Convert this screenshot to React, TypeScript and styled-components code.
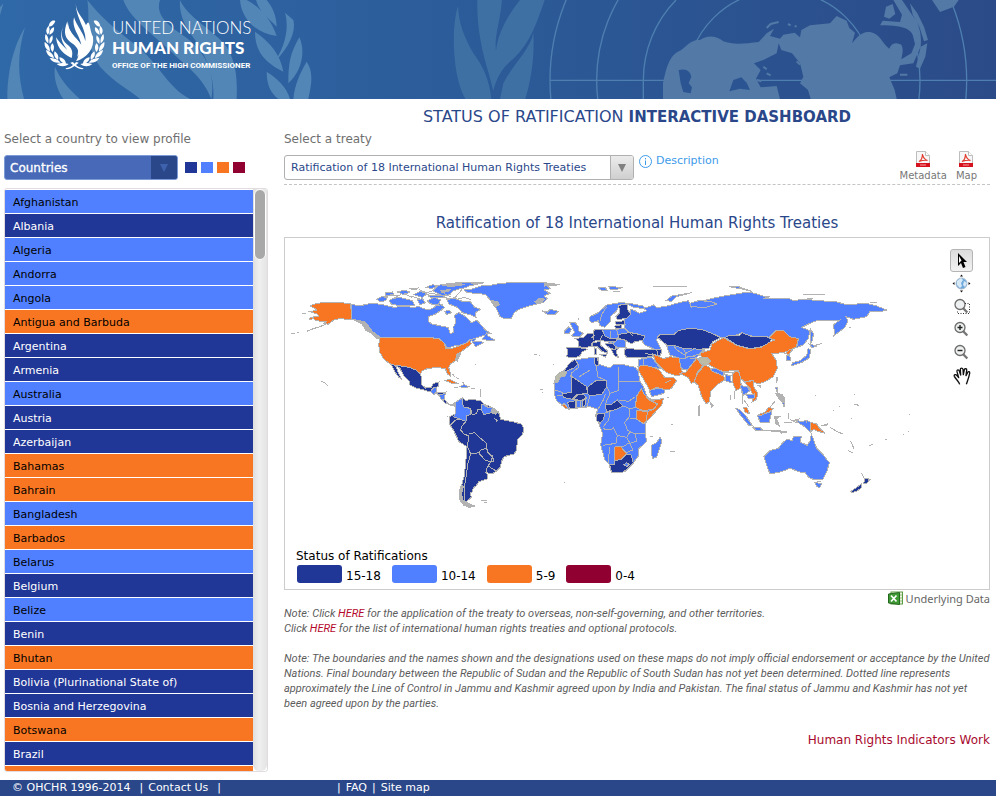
import React from "react";
import styled, { createGlobalStyle, css } from "styled-components";

const palette = {
  dark: "#213797",
  light: "#5080ff",
  orange: "#f87622",
  maroon: "#900030",
  navy: "#2a478a",
  coast: "#b2b2b2",
};

type Tone = "dark" | "light" | "orange" | "maroon";

const GlobalStyle = createGlobalStyle`
  * { box-sizing: border-box; }
  body {
    margin: 0;
    background: #fff;
    font-family: "DejaVu Sans", Verdana, sans-serif;
    font-size: 12px;
    color: #666;
  }
  h1, h2, p, ul { margin: 0; padding: 0; font-weight: normal; }
  a { text-decoration: none; color: inherit; }
  button, select { font-family: inherit; }
`;

/* ---------- header ---------- */

const Banner = styled.header`
  display: grid;
  height: 99px;
  overflow: hidden;
  background: linear-gradient(90deg, #3069a8 0%, #2d5f9d 35%, #2b5794 62%, #2b4b88 100%);
`;

const BannerArt = styled.svg`
  grid-area: 1 / 1;
  width: 100%;
  height: 99px;
`;

const Brand = styled.a`
  grid-area: 1 / 1;
  display: flex;
  align-self: start;
  justify-self: start;
  padding-left: 43px;
  color: #fff;
`;

const Emblem = styled.svg`
  width: 63px;
  height: 72px;
`;

const BrandText = styled.span`
  display: flex;
  flex-direction: column;
  padding: 18px 0 0 6px;
  font-family: Lato, sans-serif;
  white-space: nowrap;
`;

const BrandLine = styled.span<{ $kind: "thin" | "bold" | "small" }>`
  ${({ $kind }) =>
    $kind === "thin"
      ? css`font-size: 17px; line-height: 20px; font-weight: 300;`
      : $kind === "bold"
        ? css`font-size: 17px; line-height: 20px; font-weight: 900;`
        : css`font-family: Roboto, sans-serif; font-size: 8px; line-height: 16px; font-weight: 700;`}
`;

/* ---------- layout ---------- */

const Page = styled.main`
  display: grid;
  grid-template-columns: 264px minmax(0, 1fr);
  column-gap: 16px;
  padding: 0 6px 8px 4px;
`;

const Sidebar = styled.aside`
  padding-top: 31px;
`;

const Content = styled.section`
  padding-top: 7px;
`;

const FieldLabel = styled.label`
  display: block;
  line-height: 18px;
  color: #6f6f6f;
`;

const PickerRow = styled.div`
  display: flex;
  align-items: center;
  gap: 7px;
  margin-top: 7px;
`;

const Picker = styled.div<{ $solid?: boolean }>`
  display: grid;
  grid-template-columns: 1fr ${({ $solid }) => ($solid ? 26 : 23)}px;
  width: ${({ $solid }) => ($solid ? 174 : 350)}px;
  height: 25px;
  border: 1px solid ${({ $solid }) => ($solid ? "#7c9ad6" : "#b0b0b0")};
  border-radius: 3px;
  overflow: hidden;
  background: ${({ $solid }) => ($solid ? "#4869b7" : "#fff")};
`;

const Select = styled.select<{ $solid?: boolean }>`
  grid-area: 1 / 1 / 2 / 3;
  appearance: none;
  border: 0;
  outline: 0;
  background: transparent;
  padding: 0 30px 0 ${({ $solid }) => ($solid ? 5 : 6)}px;
  font-size: ${({ $solid }) => ($solid ? 12 : 11)}px;
  color: ${({ $solid }) => ($solid ? "#fff" : palette.navy)};
  -webkit-text-stroke: ${({ $solid }) => ($solid ? "0.3px" : "0")};
`;

const PickerArrow = styled.span<{ $solid?: boolean }>`
  grid-area: 1 / 2;
  display: grid;
  place-items: center;
  pointer-events: none;
  color: ${({ $solid }) => ($solid ? "#3f62ae" : "#808080")};
  background: ${({ $solid }) => ($solid ? palette.navy : "linear-gradient(#ececec, #cfcfcf)")};
  border-left: ${({ $solid }) => ($solid ? "0" : "1px solid #b0b0b0")};
`;

const Keys = styled.div`
  display: flex;
  gap: 4px;
`;

const Key = styled.span<{ $tone: Tone }>`
  width: 12px;
  height: 11px;
  background: ${({ $tone }) => palette[$tone]};
`;

const ListFrame = styled.div`
  display: grid;
  grid-template-columns: 1fr 14px;
  height: 584px;
  margin-top: 8px;
  border: 1px solid #e2dcde;
  border-radius: 3px;
  overflow: hidden;
`;

const CountryList = styled.ul`
  list-style: none;
  padding-top: 1px;
  overflow: hidden auto;
  scrollbar-width: none;
`;

const CountryRow = styled.li`
  height: 24px;
  padding-bottom: 1px;
`;

const CountryButton = styled.button<{ $tone: Tone }>`
  display: block;
  width: 100%;
  height: 23px;
  padding: 2px 8px 0;
  border: 0;
  text-align: left;
  font-size: 11px;
  line-height: 21px;
  background: ${({ $tone }) => palette[$tone]};
  color: ${({ $tone }) => ($tone === "dark" ? "#fff" : "#000")};
`;

const Track = styled.div`
  padding: 0 1px;
  background: linear-gradient(90deg, #dedede, #efefef 45%, #e4e4e4);
  border-radius: 0 0 6px 6px;
`;

const Thumb = styled.div`
  height: 71px;
  border: 1px solid #fff;
  border-radius: 6px;
  background: #a8a8a8;
`;

/* ---------- content ---------- */

const DashboardTitle = styled.h1`
  text-align: center;
  font-size: 16px;
  line-height: 22px;
  margin-bottom: 2px;
  color: ${palette.navy};
`;

const TitleStrong = styled.b`
  font-size: 15px;
`;

const TreatyBar = styled.div`
  display: flex;
  align-items: flex-start;
  height: 37px;
  border-bottom: 1px dashed #c4c4c4;
`;

const TreatyPicker = styled.div`
  margin-top: 7px;
`;

const DescriptionLink = styled.a`
  display: flex;
  align-items: center;
  gap: 4px;
  margin: 5px auto 0 5px;
  line-height: 16px;
  font-size: 11px;
  color: #3d9be9;
`;

const Downloads = styled.div`
  display: flex;
  gap: 9px;
  padding-right: 13px;
`;

const Download = styled.a`
  display: flex;
  flex-direction: column;
  align-items: center;
  padding-top: 3px;
  gap: 2px;
  font-size: 10px;
  line-height: 14px;
  color: #777;
`;

const MapTitle = styled.h2`
  margin-top: 28px;
  text-align: center;
  font-size: 15px;
  line-height: 20px;
  color: ${palette.navy};
`;

const MapPanel = styled.div`
  margin-top: 4px;
  border: 1px solid #ccc;
`;

const MapRow = styled.div`
  display: flex;
  align-items: flex-start;
  padding-right: 16px;
`;

const WorldMap = styled.svg`
  flex: 1;
  min-width: 0;
  aspect-ratio: 665 / 307;
`;

const Tools = styled.div`
  display: flex;
  flex-direction: column;
  padding-top: 11px;
`;

const Tool = styled.button<{ $active?: boolean }>`
  display: grid;
  place-items: center;
  width: 23px;
  height: 23px;
  padding: 0;
  border: 1px solid ${({ $active }) => ($active ? "#b5b5b5" : "transparent")};
  border-radius: 3px;
  background: ${({ $active }) => ($active ? "linear-gradient(#dcdcdc, #f2f2f2)" : "transparent")};
`;

const Legend = styled.div`
  padding: 2px 12px 6px 11px;
  color: #000;
`;

const LegendTitle = styled.p`
  line-height: 18px;
`;

const LegendItems = styled.ul`
  display: flex;
  gap: 11px;
  padding-left: 1px;
  list-style: none;
`;

const LegendItem = styled.li`
  display: flex;
  gap: 4px;
  line-height: 23px;
  height: 18px;
`;

const Swatch = styled.span<{ $tone: Tone }>`
  width: 45px;
  height: 18px;
  border-radius: 3px;
  background: ${({ $tone }) => palette[$tone]};
`;

const DataLink = styled.a`
  display: flex;
  justify-content: flex-end;
  align-items: center;
  gap: 3px;
  height: 16px;
  padding-top: 1px;
  font-family: "Noto Sans", "Open Sans", sans-serif;
  font-size: 11px;
`;

const Note = styled.p`
  margin: 0 -2px 15px 0;
  font-family: Roboto, sans-serif;
  font-style: italic;
  font-size: 11px;
  line-height: 15px;
  color: #5c5c5c;
`;

const NoteLink = styled.a`
  color: #b5082c;
`;

const IndicatorsLink = styled.a`
  display: block;
  margin-top: 21px;
  text-align: right;
  line-height: 16px;
  color: #a80a2e;
`;

const Footer = styled.footer`
  display: flex;
  height: 16px;
  padding-left: 12px;
  background: ${palette.navy};
  color: #fff;
  font-size: 11px;
  line-height: 15px;
`;

const FooterGroup = styled.div<{ $width?: number }>`
  display: flex;
  gap: 5px;
  min-width: ${({ $width }) => ($width ? `${$width}px` : "auto")};
`;

const FooterSpaced = styled.span`
  padding-right: 4px;
`;

/* ---------- data ---------- */

const countries: [string, Tone][] = [
  ["Afghanistan", "light"],
  ["Albania", "dark"],
  ["Algeria", "light"],
  ["Andorra", "light"],
  ["Angola", "light"],
  ["Antigua and Barbuda", "orange"],
  ["Argentina", "dark"],
  ["Armenia", "dark"],
  ["Australia", "light"],
  ["Austria", "dark"],
  ["Azerbaijan", "dark"],
  ["Bahamas", "orange"],
  ["Bahrain", "orange"],
  ["Bangladesh", "light"],
  ["Barbados", "orange"],
  ["Belarus", "light"],
  ["Belgium", "dark"],
  ["Belize", "light"],
  ["Benin", "dark"],
  ["Bhutan", "orange"],
  ["Bolivia (Plurinational State of)", "dark"],
  ["Bosnia and Herzegovina", "dark"],
  ["Botswana", "orange"],
  ["Brazil", "dark"],
];

const legend: [Tone, string][] = [
  ["dark", "15-18"],
  ["light", "10-14"],
  ["orange", "5-9"],
  ["maroon", "0-4"],
];

type Region = { fill: string; d: string };
const { dark: D, light: L, orange: O, coast: G } = palette;

const americas: Region[] = [
  { fill: O, d: "M78 108L92 102 122 96 200 100 203 147 185 148 170 145 150 150 132 163 120 160 125 155 95 152 88 145 76 150 78 143 105 138 100 132 78 125 100 120Z" },
  { fill: L, d: "M203 103L225 108 262 100 290 103 330 112 365 108 390 114 400 108 420 116 436 120 450 112 466 100 482 112 470 122 455 132 432 140 432 155 445 162 470 168 492 172 498 190 508 188 507 172 515 160 512 135 525 128 545 140 562 158 578 150 596 170 604 180 620 190 600 196 570 206 560 214 535 224 510 228 490 234 482 222 465 206 440 203 288 203 270 190 250 178 232 158 203 148Z" },
  { fill: G, d: "M203 147L215 150 240 155 255 170 264 183 290 203 280 206 266 192 246 182 234 162Z" },
  { fill: L, d: "M595 208L608 188 612 198 622 204 634 210 620 213Z" },
  { fill: L, d: "M560 208L575 206 570 214 592 214 598 218 575 230Z" },
  { fill: L, d: "M320 88L345 82 370 88 385 92 392 106 350 108 322 102 316 94Z" },
  { fill: L, d: "M278 88L292 80 310 80 305 92 290 96Z" },
  { fill: L, d: "M486 84L510 84 535 94 560 96 572 112 590 118 574 128 576 142 560 135 535 128 520 112 495 102Z" },
  { fill: L, d: "M430 92L450 82 470 90 462 104 440 102Z" },
  { fill: L, d: "M426 52L446 44 458 48 442 56ZM446 62L462 46 500 40 540 37 600 38 575 44 556 48 540 54 520 58 505 64 498 74 476 78 460 70Z" },
  { fill: G, d: "M470 44L530 40 540 44 500 50ZM470 62L500 58 494 64 474 68ZM560 40L600 38 575 44Z" },
  { fill: L, d: "M340 66L360 60 378 66 360 74ZM390 74L410 64 430 72 415 82ZM304 68L325 66 330 74 305 76ZM375 56L402 54 395 60Z" },
  { fill: L, d: "M400 90L415 86 424 98 408 104ZM432 78L472 76 484 82 445 84ZM482 124L495 120 502 128 488 134Z" },
  { fill: L, d: "M540 60L560 58 590 48 620 46 650 40 720 36 780 38 828 44 790 48 800 56 780 60 798 70 780 78 790 86 778 98 765 100 735 108 705 118 690 128 682 146 660 145 648 140 640 122 632 108 620 92 605 74 580 70 550 68Z" },
  { fill: G, d: "M620 92L640 94 646 104 634 112ZM780 38L828 44 782 48ZM752 96L768 84 782 88 768 100Z" },
  { fill: O, d: "M288 203L440 203 465 206 482 220 484 234 500 236 520 230 548 218 556 210 562 222 545 235 525 250 520 268 500 282 494 292 498 306 498 318 490 312 484 296 460 292 430 296 412 304 410 312 395 300 375 292 350 288 322 284 300 268 288 248 284 225Z" },
  { fill: G, d: "M520 250L530 250 524 262 520 274 514 270Z" },
  { fill: D, d: "M322 284L350 288 375 292 395 300 410 312 413 330 414 345 425 354 442 352 448 340 465 336 462 350 450 356 440 366 420 360 395 354 378 345 376 334 360 318 346 292 336 290 342 306 354 330 345 322 332 305Z" },
  { fill: L, d: "M440 364L448 354 458 352 458 368 448 374Z" },
  { fill: D, d: "M456 368L485 366 478 376 462 374Z" },
  { fill: L, d: "M464 376L484 370 480 388 472 388Z" },
  { fill: D, d: "M474 388L484 390 492 402 484 400Z" },
  { fill: G, d: "M490 400L502 404 514 398 516 406 500 406Z" },
  { fill: O, d: "M480 332L498 328 520 340 508 342 492 334Z" },
  { fill: L, d: "M528 350L540 344 554 350 540 354Z" },
  { fill: D, d: "M497 440L515 432 512 398 535 383 545 392 560 388 590 392 600 402 630 415 645 430 650 448 685 455 712 462 720 475 716 492 700 510 698 540 690 552 660 560 652 575 650 590 635 605 624 612 608 608 612 626 585 635 575 650 568 652 566 665 558 670 562 682 548 694 538 692 530 680 532 650 540 620 545 580 549 530 525 515 508 480 495 460Z" },
  { fill: L, d: "M515 430L514 398 535 384 534 400 540 412 560 415 560 434 548 436 546 454 534 450 520 444 508 440Z" },
  { fill: L, d: "M594 402L612 412 628 415 622 428 600 434 592 418Z" },
  { fill: G, d: "M625 414L642 425 634 432 622 428Z" },
  { fill: G, d: "M532 644L538 650 532 672 538 692 560 704 572 708 556 712 540 706 526 688 526 664Z" },
  { fill: D, d: "M548 700L562 704 556 708Z" },
];

const africaEurasia: Region[] = [
  { fill: L, d: "M362 118L375 122 388 130 410 122 400 115 412 112 430 105 440 112 465 110 500 100 535 92 545 112 552 96 570 90 582 92 620 82 690 70 720 66 760 78 780 80 760 86 800 86 835 84 850 92 880 88 980 96 1010 104 1070 100 1100 108 1130 120 1115 124 1080 124 1070 140 1030 148 1008 140 1014 152 1005 172 975 195 970 165 990 150 960 152 920 152 900 160 875 172 900 182 895 205 880 225 860 232 865 210 840 200 815 182 798 184 780 208 725 198 695 190 660 200 640 205 600 188 580 180 540 174 505 182 490 195 445 195 440 210 450 232 452 246 438 240 405 225 395 212 405 198 375 190 355 186 345 175 342 150 362 134Z" },
  { fill: D, d: "M442 202L450 194 490 195 505 182 540 174 580 180 600 188 632 203 608 215 596 236 560 238 520 235 490 225 470 225 458 215Z" },
  { fill: L, d: "M470 226L490 225 520 235 560 238 585 240 570 254 560 262 555 280 540 296 520 300 510 290 508 264 480 255 474 240Z" },
  { fill: L, d: "M238 150L240 140 265 128 290 105 330 98 360 100 400 108 404 116 370 112 350 102 328 108 318 125 300 140 300 156 284 172 268 166 266 152 245 158Z" },
  { fill: D, d: "M325 106L352 102 354 120 362 132 350 146 322 148 318 140 330 128Z" },
  { fill: D, d: "M315 156L342 152 345 162 318 162ZM314 168L336 164 334 176 318 176Z" },
  { fill: L, d: "M180 158L196 158 204 168 206 182 220 190 210 200 185 198 194 186 186 172Z" },
  { fill: L, d: "M164 182L176 170 184 178 178 190 164 190Z" },
  { fill: L, d: "M95 122L112 126 120 118 145 124 136 132 112 132Z" },
  { fill: L, d: "M278 180L345 176 356 188 326 196 322 208 345 210 348 232 320 234 300 222 284 205Z" },
  { fill: D, d: "M324 194L355 188 375 190 405 198 398 212 376 214 366 222 340 208 324 206Z" },
  { fill: D, d: "M196 206L220 202 232 192 248 190 254 178 276 178 284 198 296 204 320 206 318 214 290 216 276 210 256 212 246 218 244 230 222 232 206 230 206 214Z" },
  { fill: D, d: "M168 232L205 232 232 238 216 246 208 260 182 264 170 260 174 240Z" },
  { fill: D, d: "M246 220L270 214 272 226 294 244 292 250 276 244 260 228 248 228Z" },
  { fill: D, d: "M284 222L304 218 318 230 316 240 300 234Z" },
  { fill: D, d: "M304 240L324 236 318 246 326 264 312 256Z" },
  { fill: D, d: "M254 234l6 2v16h-6zM272 254l18 0-4 8z" },
  { fill: D, d: "M343 240L350 234 380 238 425 238 455 240 452 256 430 258 390 264 350 262 342 252Z" },
  { fill: L, d: "M386 268L425 262 436 276 452 296 430 292 400 285 386 292Z" },
  { fill: O, d: "M428 252L445 258 460 266 480 260 508 264 512 292 520 312 500 318 470 308 455 295 438 278Z" },
  { fill: O, d: "M384 290L400 285 430 292 448 300 464 322 490 322 500 332 484 356 468 360 440 352 420 362 405 335 386 302Z" },
  { fill: L, d: "M418 362L440 355 466 358 462 370 425 380Z" },
  { fill: L, d: "M185 275L204 268 250 262 264 262 264 282 300 294 310 284 340 284 376 292 386 304 388 330 400 350 410 378 425 390 460 386 455 405 405 460 405 490 410 515 384 538 385 558 362 590 345 605 305 608 296 580 285 570 272 525 278 490 262 450 256 436 264 418 240 410 220 412 185 416 165 412 140 392 132 370 134 335 150 310 165 300Z" },
  { fill: "#b9bbab", d: "M132 340L138 318 152 306 170 304 166 318 150 322 144 336Z" },
  { fill: D, d: "M163 302L178 280 194 268 204 282 192 294 168 304Z" },
  { fill: D, d: "M252 264L262 262 266 285 258 288 252 275Z" },
  { fill: D, d: "M183 318L230 350 232 370 200 374 186 388 160 382 156 370 184 368Z" },
  { fill: D, d: "M232 352L260 330 288 330 290 350 276 372 240 378 232 370Z" },
  { fill: D, d: "M190 388L205 372 220 372 228 382 215 392Z" },
  { fill: D, d: "M172 397L196 392 198 414 178 414Z" },
  { fill: D, d: "M218 392L228 386 224 410 217 410Z" },
  { fill: O, d: "M156 406L162 400 178 418 168 416Z" },
  { fill: D, d: "M285 405L306 402 322 390 338 408 320 418 290 425Z" },
  { fill: D, d: "M258 436L264 430 284 432 280 448 270 460 258 450Z" },
  { fill: O, d: "M380 378L394 356 402 372 418 390 442 402 430 418 400 422 376 412Z" },
  { fill: O, d: "M422 392L460 386 455 405 410 455 410 426 430 418 444 402Z" },
  { fill: O, d: "M378 422L412 424 410 450 402 462 378 446Z" },
  { fill: O, d: "M312 532L330 528 350 550 334 568 312 572Z" },
  { fill: D, d: "M298 582L312 584 314 572 335 568 350 554 362 552 370 578 360 590 340 606 305 608Z" },
  { fill: L, d: "M342 584l8-6 8 6-8 6zM424 526L440 518 450 502 456 514 440 562 428 565 424 548Z" },
  { fill: L, d: "M264 54L286 52 292 62 276 62ZM296 50L340 52 322 58 300 58ZM310 64h20" },
  { fill: L, d: "M468 92L485 78 545 68 500 80 485 94Z" },
  { fill: G, d: "M430 49h100M205 145v6M72 253h8M86 256h4M90 358h8M96 366h4M130 283h2M568 405v34M420 500h10M480 545h14M482 463h6M470 381h6M162 637h4" },
];

const eastAsiaPacific: Region[] = [
  { fill: D, d: "M105 202L120 196 150 196 156 188 185 200 225 198 245 206 238 220 215 230 180 236 140 225Z" },
  { fill: O, d: "M30 250L60 240 66 222 100 203 120 214 140 226 180 237 215 231 240 216 254 210 236 204 258 182 280 182 300 200 325 206 318 232 290 245 262 250 245 250 258 270 262 295 250 320 225 335 205 342 185 332 165 335 150 325 140 300 100 305 75 295 50 280 35 262Z" },
  { fill: L, d: "M-12 250L12 236 40 240 28 252 8 258-14 262Z" },
  { fill: O, d: "M-30 310L-12 306 0 290 20 265 40 285 20 310 15 335 4 340-6 322Z" },
  { fill: O, d: "M12 336L22 312 45 284 64 296 100 312 104 330 80 345 62 365 58 395 48 402 35 380 24 345Z" },
  { fill: "#bdbba6", d: "M26 264L50 262 62 274 48 288 30 280Z" },
  { fill: L, d: "M62 295L78 296 104 308 100 318 64 302Z" },
  { fill: L, d: "M105 314L120 316 124 338 106 332Z" },
  { fill: O, d: "M126 308L146 300 152 328 154 352 138 362 126 332Z" },
  { fill: L, d: "M150 346L170 350 180 362 166 372 158 378Z" },
  { fill: O, d: "M164 336L190 332 192 352 203 370 200 388 186 396 190 378 180 358Z" },
  { fill: L, d: "M168 374L192 372 192 384 176 386Z" },
  { fill: O, d: "M160 412L172 414 178 430 166 428ZM206 434L226 426 236 412 250 416 236 428 214 436Z" },
  { fill: L, d: "M138 415L150 420 168 438 188 468 176 466 152 436Z" },
  { fill: L, d: "M202 436L214 436 232 428 246 424 238 456 210 456Z" },
  { fill: L, d: "M188 472L212 474 218 480 196 480ZM62 398L70 408 64 412ZM256 352L264 354 262 368ZM276 396l8 2-2 12z" },
  { fill: G, d: "M218 480L270 484 290 486 270 486ZM256 370L270 372 284 384 282 396 268 388ZM254 440L272 438 260 446 268 468 258 462ZM296 430v18M282 456h24M242 410l14-18" },
  { fill: L, d: "M316 450L336 456 346 450 360 456 360 486 344 470 330 462Z" },
  { fill: O, d: "M360 456L380 462 388 474 406 490 384 484 372 478 360 486Z" },
  { fill: G, d: "M392 466h18l4-6M420 472l20 12 18 8M474 542l16 8M482 514l10 22M536 528l12-6M584 508h8M494 372v4M492 402l14 4M446 408h4M656 433h4M640 492h2M655 484h2M530 470h2M572 544h2M376 377h2M430 422h2M296 308h2M484 445h2" },
  { fill: O, d: "M258 322l6 2-4 10zM204 346h6v4zM286 250L298 240 310 236 296 254Z" },
  { fill: L, d: "M288 258L298 254 302 270 290 272Z" },
  { fill: L, d: "M304 288L308 278 330 272 350 256 354 236 362 240 358 264 334 278Z" },
  { fill: L, d: "M358 222L380 228 366 234Z" },
  { fill: L, d: "M362 178L370 190 368 210 362 222ZM116 50L140 48 186 64 150 56Z" },
  { fill: "none", d: "M376 226l20-6M428 200l8-8M478 172h6M340 74h66M350 84h20M540 96h20M0 68h6M26 408v30M122 376v14M134 362v24M156 378v24M162 390l14 20" },
  { fill: L, d: "M0 100L26 92 60 94 82 102 40 114 0 108Z" },
  { fill: L, d: "M222 560L240 542 265 535 280 516 292 508 306 512 312 498 334 500 330 516 352 526 360 512 364 492 372 512 380 535 400 555 418 578 412 600 398 628 370 628 356 622 345 608 330 606 300 595 275 605 240 612 232 592Z" },
  { fill: L, d: "M374 638L396 640 390 652 380 650Z" },
  { fill: D, d: "M522 624L540 628 530 640 520 642 524 632Z" },
  { fill: D, d: "M483 664L500 652 514 642 514 654 500 664 486 668Z" },
];

const americasBorders =
  "M500 465L515 450 530 448M546 454L534 468 530 480 540 492 555 498 550 530 560 552 584 548M555 492L572 488 590 505 608 520 608 535 590 540 585 550M608 535L612 548 625 560 622 575 605 572 585 550M605 610L610 590 622 575 628 574 626 556M612 588L635 602M560 552L552 580 546 620 540 660 540 690M560 415L565 435 578 430 580 420 592 418M22 190h10M38 188h6M68 184L88 176 108 170 130 160M55 131h10M112 334l12 6 8 8M506 312l8 10M516 322l10 6M536 336l8 10M510 352h12M560 354h14M590 356v24M574 283h2M488 438h4M592 692h16M600 696h8M630 446L640 450 636 456M534 58l-20 24-28 8M380 78l30 10M350 74l-20 10M300 84l14-8 30 2M360 70l24 12M404 58l22 10 18-4M420 76l24-6 30 6M480 70l20 10M440 100l20 8 16-6M520 88l22-6 20 8";
const africaBorders =
  "M208 320L240 300 M204 282L206 292 183 310 183 320M260 286L262 320 290 332M324 290L326 334 390 334M326 334L324 362 300 370 285 405M290 350L300 370M135 360L160 368M240 378L230 412M264 418L280 390 286 372M326 392L340 392 356 394 376 380M340 408L360 416 380 412M360 416L358 440 344 458 352 480 376 492 404 490M282 430L300 424 320 418M300 424L296 450 280 470M278 476L300 480 310 474 322 496 318 520 278 526M322 496L350 502 360 486 376 492 380 514 352 522 340 530 318 528M350 502L360 520 368 540 350 548M296 580L298 530M312 532V572M378 446L360 446M140 376L156 378M200 390L198 414M210 392V412M250 210v-30M270 210l8-16M300 206v-22M300 222l14-4M322 206l-20 0M254 196l-10 8M400 262l0 22M405 250l24 6M440 240l4 16M490 225l10 14 20 14 30 6M508 264l20 0 12-6 20 4M520 235l6 14M464 340l20-10M320 180l4 16M290 110l-16 26-4 18M368 196l-10-8";
const asiaBorders =
  "M100 312L104 308 126 308M150 325L164 336M124 316l14-12 12 4M172 346l12 12M250 482h24M274 490l16-6M300 448l20 10M330 446l-22 6M350 450v8M514 610l8 12M0 266l20-2M268 374l12-2M150 345l10 30M380 636l14-2";

const banner = {
  leaves:
    "M75 82C52 120 22 190 22 297H72C52 220 52 160 75 82ZM10 10L0 22V46ZM165 200C160 230 170 270 190 297H240C200 262 178 232 165 200ZM262 0C272 70 250 130 300 200C345 250 390 270 420 297H570C500 262 480 190 400 130C350 90 300 50 262 0ZM370 0C390 60 470 110 540 180C600 230 620 262 634 297C650 200 600 140 540 100C480 60 470 30 480 0ZM540 0C560 50 640 90 680 140C710 190 712 240 710 297H640C645 220 610 150 570 100C545 60 538 30 540 0ZM720 0C725 60 770 100 830 108C815 60 780 20 740 0ZM768 0C775 30 800 50 830 80C830 45 815 18 800 0ZM855 38C870 90 850 150 820 190C860 150 890 100 880 60ZM765 95C765 150 790 185 850 215C842 165 810 125 765 95ZM898 112C920 160 900 220 865 250C865 190 870 160 898 112ZM800 215C800 260 815 280 835 297H870C860 260 830 235 800 215ZM920 185C945 220 930 270 925 297H880C885 250 900 220 920 185Z",
  sprig:
    "M1374 18C1358 70 1358 150 1370 220C1376 250 1384 276 1396 297H1474C1468 240 1450 200 1420 160C1392 110 1376 70 1374 18ZM1432 0C1430 80 1445 150 1466 220L1480 272C1490 230 1510 200 1540 176C1590 130 1610 70 1634 0H1560C1520 50 1494 100 1488 152C1482 110 1500 70 1506 0ZM1600 98C1590 150 1540 190 1510 250L1500 297H1576C1596 230 1604 160 1600 98Z",
  land:
    "M1989 297V250C1998 210 2006 165 2040 152C2060 140 2070 118 2100 120C2120 104 2150 106 2170 124C2200 136 2240 130 2276 126L2300 100 2322 86 2310 108 2340 116 2350 104 2384 98 2400 112 2404 90 2430 76 2490 70 2510 48 2540 62 2548 84 2565 98 2556 130C2580 100 2590 96 2610 96C2640 100 2646 130 2668 146C2674 128 2690 126 2704 134C2712 150 2706 164 2704 178L2734 160 2746 130C2740 90 2724 76 2640 76L2648 62 2700 66 2706 44 2680 0H2706L2740 50C2756 70 2766 100 2762 140L2740 190 2700 196 2692 220 2668 232 2684 270 2690 297H2432L2424 270 2400 250 2410 230 2400 190 2376 160 2344 150 2336 130 2330 160 2290 180 2262 190 2282 210 2268 236 2282 262 2330 258 2340 297ZM2762 140L2782 130 2776 170 2760 206 2748 200ZM2730 10L2752 40 2772 80 2784 120 2772 124 2758 80 2738 44ZM2796 0L2820 36 2862 20 2876 0ZM2658 20l20-8 8 30-18 14-16-6z",
  holes:
    "M2036 210C2060 204 2070 214 2074 230L2066 250 2076 262 2072 280 2050 276 2042 250ZM2200 240l24-8 16 16 10 22-30-4-32 8z",
};

/* ---------- icons ---------- */

const Arrow = () => (
  <svg width="10" height="8" viewBox="0 0 10 8" aria-hidden="true">
    <path d="M1 0h8L5 8z" fill="currentColor" />
  </svg>
);

const PdfIcon = () => (
  <svg width="14" height="16" viewBox="0 0 14 16" aria-hidden="true">
    <path d="M.5.5h9l4 4v11H.5z" fill="#f7f7f7" stroke="#bdbdbd" />
    <path d="M9.500.5v4h4" fill="#fff" stroke="#bdbdbd" />
    <path d="M3 10.500c2-1 3.500-4 3.500-7.500.5 4 2 5.500 5 6.500-3-.7-5.500 0-8.500 1z" fill="none" stroke="#e23b2e" strokeWidth="1.200" />
    <path d="M0 12h14v4H0z" fill="#d5121e" />
    <path d="M4 14h6" stroke="#f6a0a0" />
  </svg>
);

const InfoIcon = () => (
  <svg width="13" height="13" viewBox="0 0 13 13" aria-hidden="true">
    <circle cx="6.500" cy="6.500" r="6" fill="none" stroke="#3d9be9" />
    <path d="M6.500 5.500v4.500M6.500 3v1.400" stroke="#3d9be9" />
  </svg>
);

const ExcelIcon = () => (
  <svg width="15" height="15" viewBox="0 0 15 15" aria-hidden="true">
    <rect x="3" y="1" width="11.500" height="12" fill="#e8f3df" stroke="#5d9a44" />
    <path d="M9 4h5M9 7h5M9 10h5" stroke="#8fbf78" />
    <path d="M.5 3l11-1.500v12L.5 12z" fill="#3f9a35" stroke="#24681f" />
    <path d="M3 4.500l5.500 6M8.500 4.500L3 10.500" stroke="#fff" strokeWidth="1.700" />
  </svg>
);

const Lens = ({ children }: { children?: React.ReactNode }) => (
  <svg width="17" height="17" viewBox="0 0 17 17" aria-hidden="true">
    <path d="M9.500 9.500l4.800 5" stroke="#777" strokeWidth="2.400" />
    <circle cx="7" cy="6.500" r="5" fill="#eef0f1" stroke="#6c6c6c" strokeWidth="1.300" />
    {children}
  </svg>
);

const tools: { label: string; icon: React.ReactNode }[] = [
  {
    label: "Pointer",
    icon: (
      <svg width="15" height="18" viewBox="0 0 15 18">
        <path d="M4 1v13l3-3 2 5 2.500-1-2-5H13z" fill="#000" />
        <path d="M5 4v7l2.500-2.500" fill="#fff" />
      </svg>
    ),
  },
  {
    label: "Full extent",
    icon: (
      <svg width="19" height="19" viewBox="0 0 19 19">
        <circle cx="9.500" cy="9.500" r="5.500" fill="#70aadd" stroke="#a7b9c9" />
        <path d="M5 7l4-3 2 2-2 3 1 3-2 2-3-3zM12 7l3 2-2 4-2-2z" fill="#d7e9f7" />
        <path d="M8 2.500h3L9.500.5zM8 16.500h3l-1.500 2zM2.500 8v3l-2-1.500zM16.500 8v3l2-1.500z" fill="#111" />
      </svg>
    ),
  },
  {
    label: "Zoom to area",
    icon: (
      <Lens>
        <path d="M12 5.500h4.500v10h-12v-3" fill="none" stroke="#333" strokeDasharray="1 1.500" />
      </Lens>
    ),
  },
  {
    label: "Zoom in",
    icon: (
      <Lens>
        <path d="M4.500 6.500h5M7 4v5" stroke="#222" strokeWidth="1.400" />
      </Lens>
    ),
  },
  {
    label: "Zoom out",
    icon: (
      <Lens>
        <path d="M4.500 6.500h5" stroke="#222" strokeWidth="1.400" />
      </Lens>
    ),
  },
  {
    label: "Pan",
    icon: (
      <svg width="18" height="18" viewBox="0 0 54 54" fill="none" stroke="#111" strokeWidth="4" strokeLinejoin="round">
        <path d="M20 52C18 44 8 36 4 28C2 22 9 21 12 26L17 32L12 14C11 8 17 7 19 12L23 24L22 7C22 2 29 2 30 7L31 23L34 8C36 3 42 5 41 10L39 26L44 16C47 12 51 14 50 19C48 30 44 40 40 52" />
      </svg>
    ),
  },
];

const laurel =
  "M166 63C158 58 147 66 146 80C156 80 163 72 166 63ZM146 78C138 86 136 96 144 104C150 94 150 86 146 78ZM162 82C154 84 148 92 148 104C158 102 164 92 162 82ZM137 102C133 114 136 124 145 130C147 118 144 108 137 102ZM157 106C149 112 146 120 149 132C158 124 160 116 157 106ZM134 126C132 140 140 150 150 154C150 140 144 132 134 126ZM157 130C150 138 150 148 158 156C164 146 163 136 157 130ZM138 150C140 164 150 172 162 174C160 162 150 154 138 150ZM164 154C160 164 164 174 174 180C178 168 172 160 164 154ZM149 174C156 186 168 190 182 188C174 178 162 174 149 174ZM178 172C178 182 186 190 198 192C198 182 190 174 178 172ZM170 192C182 202 196 200 206 192C194 188 182 188 170 192ZM200 208C214 206 228 196 236 188L228 186C220 196 210 204 196 204Z";

/* ---------- page ---------- */

const Regions = ({ items, borders }: { items: Region[]; borders: string }) => (
  <>
    {items.map((r) => (
      <path key={r.d} d={r.d} fill={r.fill} />
    ))}
    <path d={borders} fill="none" />
  </>
);

export default function App() {
  return (
    <>
      <GlobalStyle />
      <Banner>
        <BannerArt viewBox="0 0 2988 297" preserveAspectRatio="xMidYMin slice" aria-hidden="true">
          <path d={banner.leaves} fill="#5286b7" />
          <path d={banner.sprig} fill="#3f70a4" />
          <g fill="none" stroke="#4f7fb0" strokeWidth="4">
            <circle cx="2340" cy="253" r="282" />
            <path d="M1930 241A345 345 0 0 1 2028 0M1930 241V297" />
            <circle cx="2275" cy="241" r="485" />
            <circle cx="2275" cy="241" r="625" />
            <path d="M1650 241H2988" />
          </g>
          <path d={banner.land} fill="#5379a7" />
          <path d={banner.holes} fill="#2b5592" />
          <path
            d="M2300 84l12-12 24-6M2364 72l8 4M2384 78l6 2M2260 210l10 10M2290 200l10 8M2270 240l14 4M2300 220l12 6M2390 184l10 10M2440 262h12M2700 224h22"
            fill="none"
            stroke="#5379a7"
            strokeWidth="6"
          />
        </BannerArt>
        <Brand href="#home">
          <Emblem viewBox="129 0 189 216" fill="#fff" aria-hidden="true">
            <path d={laurel} />
            <path d={laurel} transform="translate(447 0) scale(-1 1)" />
            <path d="M228 0C222 34 250 52 258 76C270 50 268 92 279 110C284 146 262 172 228 184C244 160 234 142 216 130C196 116 188 100 202 64C202 92 226 110 244 134C238 104 214 84 222 52C230 78 252 100 256 124C262 88 222 50 228 0Z" />
            <path d="M190 78C182 100 184 118 200 132C216 144 220 156 215 174C196 166 172 150 168 112C176 124 186 136 202 150C188 130 176 112 190 78Z" />
            <path d="M204 68C196 92 204 108 218 120C232 132 238 146 232 170C252 154 246 136 230 118C218 106 206 92 204 68Z" />
          </Emblem>
          <BrandText>
            <BrandLine $kind="thin">UNITED NATIONS</BrandLine>
            <BrandLine $kind="bold">HUMAN RIGHTS</BrandLine>
            <BrandLine $kind="small">OFFICE OF THE HIGH COMMISSIONER</BrandLine>
          </BrandText>
        </Brand>
      </Banner>

      <Page>
        <Sidebar>
          <FieldLabel htmlFor="profile">Select a country to view profile</FieldLabel>
          <PickerRow>
            <Picker $solid>
              <Select id="profile" $solid defaultValue="Countries">
                <option>Countries</option>
              </Select>
              <PickerArrow $solid>
                <Arrow />
              </PickerArrow>
            </Picker>
            <Keys>
              {legend.map(([tone]) => (
                <Key key={tone} $tone={tone} />
              ))}
            </Keys>
          </PickerRow>
          <ListFrame>
            <CountryList>
              {countries.map(([name, tone]) => (
                <CountryRow key={name}>
                  <CountryButton type="button" $tone={tone}>
                    {name}
                  </CountryButton>
                </CountryRow>
              ))}
              <CountryRow>
                <CountryButton type="button" $tone="orange" aria-label="Next country" />
              </CountryRow>
            </CountryList>
            <Track>
              <Thumb />
            </Track>
          </ListFrame>
        </Sidebar>

        <Content>
          <DashboardTitle>
            STATUS OF RATIFICATION <TitleStrong>INTERACTIVE DASHBOARD</TitleStrong>
          </DashboardTitle>
          <FieldLabel htmlFor="treaty">Select a treaty</FieldLabel>
          <TreatyBar>
            <TreatyPicker>
              <Picker>
                <Select id="treaty" defaultValue="all">
                  <option value="all">Ratification of 18 International Human Rights Treaties</option>
                </Select>
                <PickerArrow>
                  <Arrow />
                </PickerArrow>
              </Picker>
            </TreatyPicker>
            <DescriptionLink href="#description">
              <InfoIcon />
              Description
            </DescriptionLink>
            <Downloads>
              <Download href="#metadata">
                <PdfIcon />
                Metadata
              </Download>
              <Download href="#map">
                <PdfIcon />
                Map
              </Download>
            </Downloads>
          </TreatyBar>

          <MapTitle>Ratification of 18 International Human Rights Treaties</MapTitle>
          <MapPanel>
            <MapRow>
              <WorldMap viewBox="3 -96 1995 921" role="img" aria-label="World map of ratification status">
                <g stroke={palette.coast} strokeWidth="3" shapeRendering="crispEdges">
                  <Regions items={americas} borders={americasBorders} />
                  <g transform="translate(678 0)">
                    <Regions items={africaEurasia} borders={africaBorders} />
                  </g>
                  <g transform="translate(1218 0)">
                    <Regions items={eastAsiaPacific} borders={asiaBorders} />
                  </g>
                </g>
              </WorldMap>
              <Tools>
                {tools.map((tool, i) => (
                  <Tool key={tool.label} type="button" aria-label={tool.label} $active={i === 0}>
                    {tool.icon}
                  </Tool>
                ))}
              </Tools>
            </MapRow>
            <Legend>
              <LegendTitle>Status of Ratifications</LegendTitle>
              <LegendItems>
                {legend.map(([tone, range]) => (
                  <LegendItem key={range}>
                    <Swatch $tone={tone} />
                    {range}
                  </LegendItem>
                ))}
              </LegendItems>
            </Legend>
          </MapPanel>
          <DataLink href="#data">
            <ExcelIcon />
            Underlying Data
          </DataLink>

          <Note>
            Note: Click <NoteLink href="#territories">HERE</NoteLink> for the application of the treaty to overseas,
            non-self-governing, and other territories.
            <br />
            Click <NoteLink href="#treaties">HERE</NoteLink> for the list of international human rights treaties and
            optional protocols.
          </Note>
          <Note>
            Note: The boundaries and the names shown and the designations used on these maps do not imply official
            endorsement or acceptance by the United Nations. Final boundary between the Republic of Sudan and the
            Republic of South Sudan has not yet been determined. Dotted line represents approximately the Line of
            Control in Jammu and Kashmir agreed upon by India and Pakistan. The final status of Jammu and Kashmir has
            not yet been agreed upon by the parties.
          </Note>
          <IndicatorsLink href="#indicators">Human Rights Indicators Work</IndicatorsLink>
        </Content>
      </Page>

      <Footer>
        <FooterGroup $width={325}>
          <FooterSpaced>© OHCHR 1996-2014</FooterSpaced>
          <span>|</span>
          <FooterSpaced as="a" href="#contact">
            Contact Us
          </FooterSpaced>
          <span>|</span>
        </FooterGroup>
        <FooterGroup>
          <span>|</span>
          <a href="#faq">FAQ</a>
          <span>|</span>
          <a href="#sitemap">Site map</a>
        </FooterGroup>
      </Footer>
    </>
  );
}
